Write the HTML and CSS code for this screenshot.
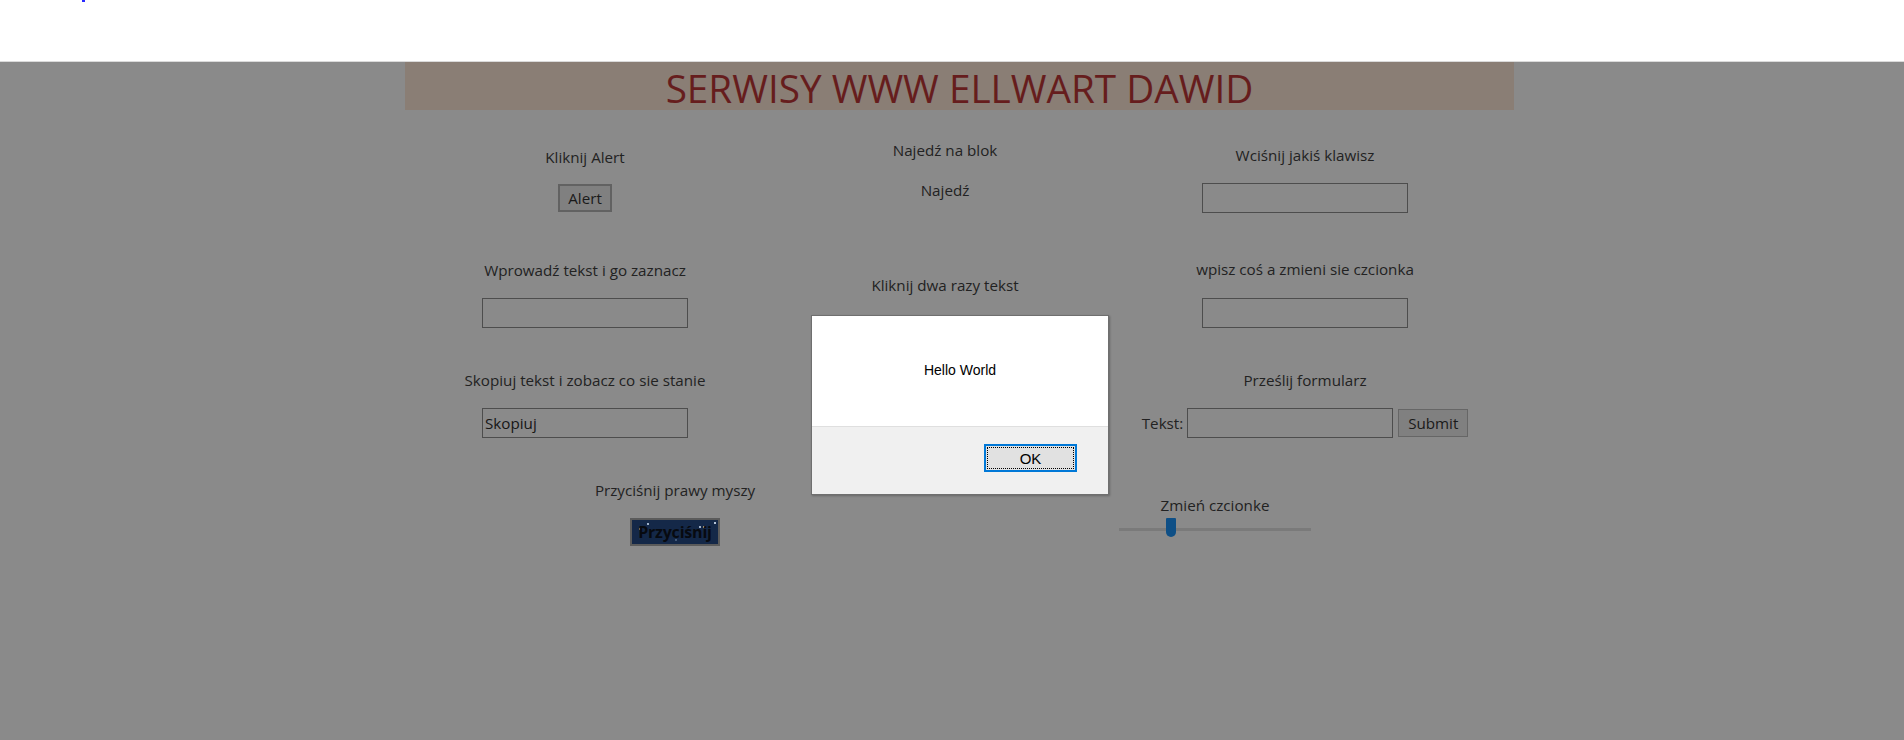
FILE: index.html
```html
<!DOCTYPE html>
<html lang="pl">
<head>
<meta charset="utf-8">
<title>Serwisy WWW Ellwart Dawid</title>
<link rel="stylesheet" href="styles.css">
</head>
<body>
<div class="topbar"><span class="link-dot"></span></div>
<main class="stage">
  <div class="page">
    <header class="banner"><h1 class="title">SERWISY WWW ELLWART DAWID</h1></header>

    <section class="row row-three row-1">
      <div class="cell">
        <p class="label">Kliknij Alert</p>
        <button class="btn btn-alert" type="button">Alert</button>
      </div>
      <div class="cell">
        <p class="label label-high">Najedź na blok</p>
        <p class="label hover-target">Najedź</p>
      </div>
      <div class="cell">
        <p class="label label-mid">Wciśnij jakiś klawisz</p>
        <input class="field" type="text">
      </div>
    </section>

    <section class="row row-three row-2">
      <div class="cell">
        <p class="label">Wprowadź tekst i go zaznacz</p>
        <input class="field" type="text">
      </div>
      <div class="cell">
        <p class="label label-low">Kliknij dwa razy tekst</p>
      </div>
      <div class="cell">
        <p class="label label-mid2">wpisz coś a zmieni sie czcionka</p>
        <input class="field field-after-mid" type="text">
      </div>
    </section>

    <section class="row row-three row-3">
      <div class="cell">
        <p class="label">Skopiuj tekst i zobacz co sie stanie</p>
        <input class="field" type="text" value="Skopiuj">
      </div>
      <div class="cell"></div>
      <div class="cell">
        <p class="label">Prześlij formularz</p>
        <form class="form-line">
          <label class="form-label">Tekst:</label>
          <input class="field field-form" type="text">
          <button class="btn btn-submit" type="button">Submit</button>
        </form>
      </div>
    </section>

    <section class="row row-two">
      <div class="cell">
        <p class="label">Przyciśnij prawy myszy</p>
        <button class="btn btn-space" type="button">Przyciśnij</button>
      </div>
      <div class="cell">
        <p class="label label-low">Zmień czcionke</p>
        <input class="slider" type="range" min="0" max="100" value="26">
      </div>
    </section>
  </div>
</main>

<div class="dialog" role="alertdialog">
  <div class="dialog-body">Hello World</div>
  <div class="dialog-foot"><button class="dialog-ok" type="button">OK</button></div>
</div>
</body>
</html>
```

FILE: styles.css
```css
* { box-sizing: border-box; }

html, body {
  margin: 0;
  padding: 0;
}

body {
  background: #8a8a8a;
  font-family: "Open Sans", "Noto Sans", sans-serif;
  color: #222222;
  height: 740px;
  overflow: hidden;
}

.topbar {
  height: 62px;
  background: #ffffff;
  border-bottom: 1px solid #dadada;
  display: flex;
  align-items: flex-start;
}

.link-dot {
  display: block;
  width: 3px;
  height: 2px;
  margin-left: 82px;
  background: #2a2aff;
}

.stage {
  background: #8a8a8a;
  height: 678px;
}

.page {
  width: 1109px;
  margin-left: 405px;
}

.banner {
  height: 48px;
  background: #8a7e75;
  padding-top: 4px;
  text-align: center;
}

.title {
  margin: 0;
  font-family: "Open Sans", sans-serif;
  font-weight: 400;
  font-size: 38.7px;
  line-height: 44px;
  color: #661d1d;
}

.row { display: grid; }
.row-three { grid-template-columns: repeat(3, 360px); }
.row-two { grid-template-columns: repeat(2, 540px); }
.row-1 { height: 113px; }
.row-2 { height: 110px; }
.row-3 { height: 110px; }

.cell {
  display: flex;
  flex-direction: column;
  align-items: center;
}

.label {
  margin: 37px 0 0;
  font-size: 15.2px;
  line-height: 20px;
  white-space: nowrap;
}
.label-high { margin-top: 30px; }
.label-mid { margin-top: 35px; }
.label-mid2 { margin-top: 36px; }
.label-low { margin-top: 52px; }
.hover-target { margin-top: 20px; }

.field {
  display: block;
  width: 206px;
  height: 30px;
  margin-top: 18px;
  padding: 0 2px;
  background: #8a8a8a;
  border: 1px solid #4d4d4d;
  font-family: "Open Sans", sans-serif;
  font-size: 15.2px;
  color: #161616;
  outline: none;
}
.field-after-mid { margin-top: 19px; }

.btn {
  font-family: "Open Sans", sans-serif;
  font-size: 15.2px;
  color: #1a1a1a;
  padding: 0;
  cursor: default;
}

.btn-alert {
  width: 54px;
  height: 28px;
  margin-top: 17px;
  background: #808080;
  border: 2px solid #626262;
}

.form-line {
  display: flex;
  align-items: center;
  margin-top: 18px;
}
.form-label {
  font-size: 15.2px;
  line-height: 20px;
  margin-right: 4px;
}
.field-form { margin-top: 0; }
.btn-submit {
  width: 70px;
  height: 28px;
  margin-left: 5px;
  background: #808080;
  border: 1px solid #666666;
}

.btn-space {
  width: 90px;
  height: 28px;
  margin-top: 18px;
  border: 2px solid #5b5b5b;
  font-weight: 700;
  font-size: 16px;
  letter-spacing: -0.2px;
  color: #070a10;
  background-color: #142848;
  background-image:
    radial-gradient(circle at 16px 4px, #9fb0c8 0.8px, transparent 1.3px),
    radial-gradient(circle at 8px 9px, #7f90a8 0.7px, transparent 1.2px),
    radial-gradient(circle at 68px 7px, #9fb0c8 0.8px, transparent 1.3px),
    radial-gradient(circle at 72px 7px, #9fb0c8 0.8px, transparent 1.3px),
    radial-gradient(circle at 83px 3px, #b6c4d8 0.8px, transparent 1.3px),
    radial-gradient(circle at 44px 20px, #4f6686 0.6px, transparent 1.1px);
}

.slider {
  -webkit-appearance: none;
  appearance: none;
  display: block;
  width: 192px;
  height: 3px;
  margin: 13px 0 0;
  padding: 0;
  background: transparent;
}
.slider::-webkit-slider-runnable-track {
  height: 3px;
  background: #7a7a7a;
  border: none;
}
.slider::-webkit-slider-thumb {
  -webkit-appearance: none;
  appearance: none;
  width: 10px;
  height: 19px;
  margin-top: -10px;
  background: #0e4f86;
  border: none;
  border-radius: 1px 1px 5px 5px;
}

.dialog {
  position: absolute;
  left: 811px;
  top: 315px;
  width: 298px;
  height: 180px;
  background: #f0f0f0;
  border: 1px solid #6f6f6f;
  box-shadow: 1px 1px 2px rgba(0, 0, 0, 0.25);
  display: flex;
  flex-direction: column;
  font-family: "Liberation Sans", Arial, sans-serif;
}

.dialog-body {
  height: 110px;
  background: #ffffff;
  padding-top: 46px;
  text-align: center;
  font-size: 14px;
  line-height: 16px;
  color: #000;
}

.dialog-foot {
  flex: 1;
  border-top: 1px solid #dfdfdf;
  display: flex;
  justify-content: flex-end;
  align-items: flex-start;
  padding: 17px 31px 0 0;
}

.dialog-ok {
  width: 93px;
  height: 28px;
  background: #e1e1e1;
  border: 2px solid #0078d7;
  outline: 1px dotted #000;
  outline-offset: -4px;
  font-family: "Liberation Sans", Arial, sans-serif;
  font-size: 15px;
  color: #000;
  padding: 0;
}
```
